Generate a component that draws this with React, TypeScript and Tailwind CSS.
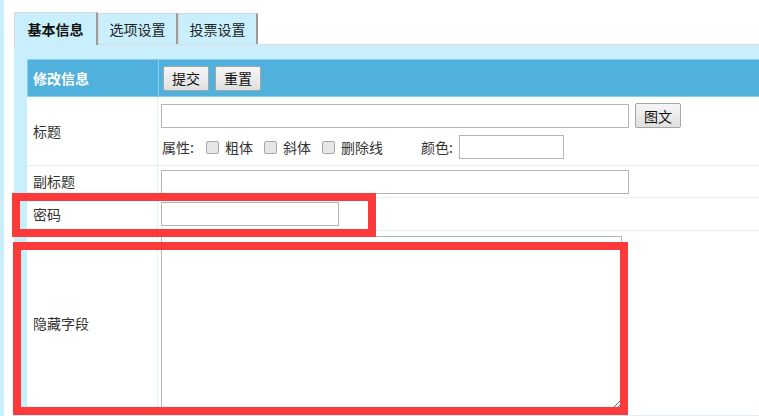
import React from "react";

const font = { fontFamily: '"Noto Sans CJK SC", "Noto Sans", sans-serif' };

function Tab({ label, active }: { label: string; active?: boolean }) {
  return (
    <div
      className={
        "flex items-center justify-center bg-[#c9effc] border-l border-t border-r-2 border-l-[#d8d8d8] border-t-[#d8d8d8] border-r-[#9a9a9a] " +
        (active
          ? "w-[84px] h-[33px] font-bold text-[#111] relative -mb-px z-10"
          : "w-[80px] h-[31px] text-[#222]")
      }
    >
      {label}
    </div>
  );
}

function Check({ label }: { label: string }) {
  return (
    <span className="flex items-center gap-[6px] mr-[11px]">
      <span className="w-[13px] h-[13px] rounded-[2px] border border-[#a8a8a8] bg-[#e6e6e6]" />
      <span>{label}</span>
    </span>
  );
}

function Btn({ label }: { label: string }) {
  return (
    <button className="h-[25px] px-[8px] border border-[#a6a6a6] rounded-[2px] bg-gradient-to-b from-[#f6f6f6] to-[#e0e0e0] text-[14px] leading-none text-[#111]">
      {label}
    </button>
  );
}

function Row({ label, h, children }: { label: string; h: string; children: React.ReactNode }) {
  return (
    <div className={"flex border-b border-[#e2eef8] bg-white " + h}>
      <div className="w-[131px] shrink-0 flex items-center pl-[6px] border-r border-[#e2eef8] text-[#333]">
        {label}
      </div>
      <div className="flex-1 pl-[3px]">{children}</div>
    </div>
  );
}

export default function App() {
  return (
    <div className="relative w-[759px] h-[416px] overflow-hidden bg-white flex text-[14px]" style={font}>
      <div className="w-[4px] shrink-0 bg-[#c9effc]" />
      <div className="flex-1 pl-[10px] pt-[12px] flex flex-col">
        <div className="flex items-end h-[33px] border-b border-[#dcdcdc]">
          <Tab label="基本信息" active />
          <Tab label="选项设置" />
          <Tab label="投票设置" />
        </div>
        <div className="flex-1 bg-[#c9effc] pt-[14px] pl-[13px]">
          <div className="flex h-[38px] bg-[#50b2dc] border border-[#86cfee] border-r-0">
            <div className="w-[131px] shrink-0 flex items-center pl-[5px] border-r border-[#86cfee] text-white font-bold">
              修改信息
            </div>
            <div className="flex items-center gap-[6px] pl-[4px]">
              <Btn label="提交" />
              <Btn label="重置" />
            </div>
          </div>
          <Row label="标题" h="h-[69px]">
            <div className="flex items-center gap-[6px] pt-[6px]">
              <input className="w-[468px] h-[24px] border border-[#b5b5b5] bg-white outline-none" />
              <Btn label="图文" />
            </div>
            <div className="flex items-center mt-[7px] text-[#333] pl-[1px]">
              <span className="mr-[12px]">属性:</span>
              <Check label="粗体" />
              <Check label="斜体" />
              <Check label="删除线" />
              <span className="ml-[27px] mr-[6px]">颜色:</span>
              <input className="w-[105px] h-[24px] border border-[#b5b5b5] bg-white outline-none" />
            </div>
          </Row>
          <Row label="副标题" h="h-[32px]">
            <div className="flex items-center h-full">
              <input className="w-[468px] h-[24px] border border-[#b5b5b5] bg-white outline-none" />
            </div>
          </Row>
          <Row label="密码" h="h-[33px]">
            <div className="flex items-center h-full">
              <input className="w-[178px] h-[24px] border border-[#b5b5b5] bg-white outline-none" />
            </div>
          </Row>
          <Row label="隐藏字段" h="h-[185px]">
            <div className="pt-[5px]">
              <textarea className="block w-[461px] h-[174px] border border-[#b5b5b5] bg-white outline-none resize" />
            </div>
          </Row>
        </div>
      </div>
      <div className="absolute left-[12px] top-[193px] w-[364px] h-[44px] border-[8px] border-[#fd3a3a]" />
      <div className="absolute left-[13px] top-[242px] w-[615px] h-[173px] border-[8px] border-[#fd3a3a]" />
    </div>
  );
}
